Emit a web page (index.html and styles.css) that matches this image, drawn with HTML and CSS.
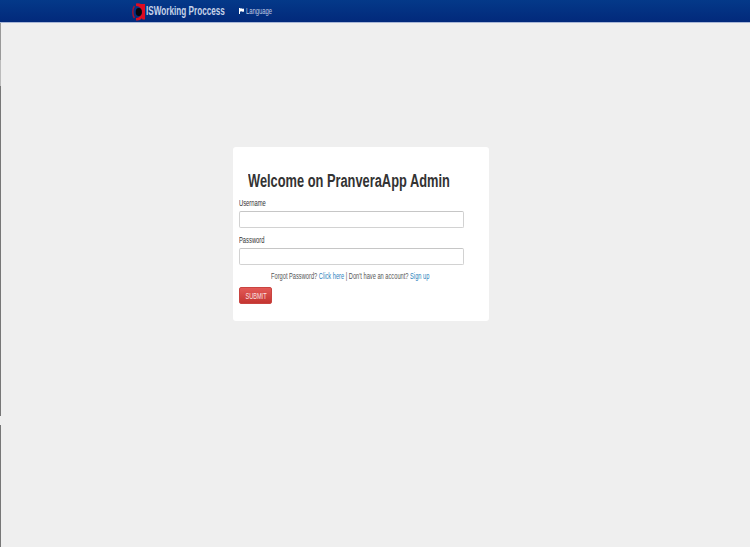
FILE: index.html
```html
<!DOCTYPE html>
<html lang="en">
<head>
<meta charset="utf-8">
<title>PranveraApp Admin</title>
<link rel="stylesheet" href="styles.css">
</head>
<body>
<header class="navbar">
  <a class="brand">
    <svg class="logo" width="15" height="18" viewBox="0 0 15 18">
      <path d="M2.4 3Q.8 5 .8 9T2.4 15" fill="none" stroke="#a31336" stroke-width="1.5"/>
      <path d="M4 .5Q6.5 -.3 9 1H13V16.5H10.6L9.8 15.2Q8 18 4 17.4V15Q9.5 14.6 9.5 9T4 3Z" fill="#dc0b22"/>
      <ellipse cx="6.8" cy="9" rx="3.1" ry="4" fill="#05060f"/>
    </svg>
    <span class="brand-name">ISWorking Proccess</span>
  </a>
  <a class="language">
    <svg class="flag" width="5" height="6" viewBox="0 0 5 6">
      <path d="M0 0H1V6H0ZM1 .4Q2.2 0 3 .6T5 .4V3.6Q4 4 3 3.5T1 3.7Z" fill="#fff"/>
    </svg>
    <span class="language-name">Language</span>
  </a>
</header>
<div class="edge"><i class="edge-upper"></i><i class="edge-lower"></i></div>
<main class="card">
  <h1 class="title">Welcome on PranveraApp Admin</h1>
  <form class="form">
    <label class="label" for="username">Username</label>
    <input class="field" id="username" type="text">
    <label class="label" for="password">Password</label>
    <input class="field" id="password" type="password">
    <p class="help">Forgot Password? <a>Click here</a> | Don't have an account? <a>Sign up</a></p>
    <button class="submit" type="button"><span>SUBMIT</span></button>
  </form>
</main>
</body>
</html>
```
FILE: styles.css
```css
* { box-sizing: border-box; }
body {
  margin: 0;
  height: 547px;
  overflow: hidden;
  background: #efefef;
  font: 9px/10px "Liberation Sans", Arial, sans-serif;
  color: #333;
  display: grid;
  grid-template: 23px 1fr / 1px 1fr;
}
.navbar {
  grid-column: 1 / 3;
  display: flex;
  padding-left: 132px;
  background: linear-gradient(#043989, #02297b);
  border-bottom: 1px solid #a9b7d6;
}
.brand { display: flex; width: 107px; padding-top: 3px; }
.logo { flex: none; margin-right: -1px; }
.brand-name {
  font-size: 12px;
  line-height: 16px;
  font-weight: bold;
  color: #c6d3e9;
  white-space: nowrap;
  transform: scaleX(.681);
  transform-origin: left;
}
.language { display: flex; padding-top: 6px; }
.flag { margin: 2px 2px 0 0; }
.language-name {
  color: #c0cce3;
  transform: scaleX(.65);
  transform-origin: left;
}
.edge { display: flex; flex-direction: column; justify-content: space-between; }
.edge-upper { height: 393px; background: linear-gradient(#999 0 37px, #bbb 37px 63px, #777 63px); }
.edge-lower { height: 122px; background: #777; }
.card {
  width: 256px;
  height: 174px;
  margin: 124px 0 0 232px;
  padding: 23px 25px 0 6px;
  background: #fff;
  border-radius: 3px;
}
.title {
  margin: 0 0 5px 8.5px;
  width: max-content;
  font-size: 18px;
  line-height: 22px;
  transform: scaleX(.713);
  transform-origin: left;
}
.form { display: flex; flex-direction: column; align-items: flex-start; }
.label {
  height: 14px;
  padding-top: 1px;
  transform: scaleX(.645);
  transform-origin: left;
}
.field {
  width: 225px;
  height: 17px;
  margin: 0 0 6px;
  padding: 0 4px;
  border: 1px solid #d2d2d2;
  border-top-color: #c6c6c6;
  border-radius: 2px;
  background: #fff;
}
.help {
  margin: 0 0 6px 32px;
  white-space: nowrap;
  color: #555;
  transform: scaleX(.633);
  transform-origin: left;
}
.help a { color: #2a7fbd; }
.submit {
  width: 33px;
  height: 17px;
  padding: 0;
  display: flex;
  align-items: center;
  justify-content: center;
  border: 1px solid #c94440;
  border-radius: 2px;
  background: linear-gradient(#e35a57, #c43531);
  color: #fbe3e2;
  font: inherit;
}
.submit span { transform: scaleX(.62); }
```
